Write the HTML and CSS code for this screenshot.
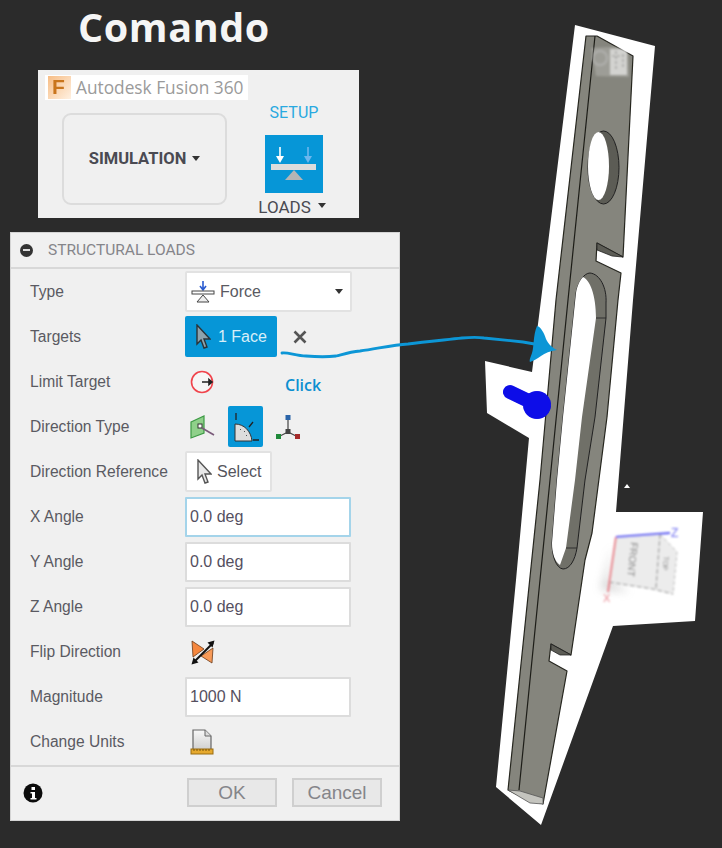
FILE: index.html
```html
<!DOCTYPE html>
<html lang="pt">
<head>
    <meta charset="UTF-8">
    <meta name="viewport" content="width=device-width, initial-scale=1.0">
    <title>Comando</title>
    <link rel="stylesheet" href="styles.css">
</head>
<body>
<div class="page">
    <div class="left">
        <h1 class="title">Comando</h1>

        <div class="toolbar">
            <div class="app-strip">
                <svg class="app-logo" width="23" height="23" viewBox="0 0 23 23">
                    <defs>
                        <linearGradient id="logoBg" x1="0" y1="0" x2="1" y2="1">
                            <stop offset="0" stop-color="#f7bd85"/>
                            <stop offset="1" stop-color="#fff1e2"/>
                        </linearGradient>
                        <filter id="logoBlur">
                            <feGaussianBlur stdDeviation="0.6"/>
                        </filter>
                    </defs>
                    <rect width="23" height="23" fill="url(#logoBg)"/>
                    <text x="4" y="18" class="logo-letter" filter="url(#logoBlur)">F</text>
                </svg>
                <span>Autodesk Fusion 360</span>
            </div>
            <div class="ribbon">
                <div class="sim-btn">SIMULATION<span class="caret"></span></div>
                <div class="setup">
                    <div class="setup-title">SETUP</div>
                    <svg class="setup-icon" width="58" height="58" viewBox="0 0 58 58">
                        <rect width="58" height="58" fill="#0696d7"/>
                        <path d="M15 12v13" stroke="#fff" stroke-width="1.6"/>
                        <path d="M11 21h8l-4 7z" fill="#fff"/>
                        <path d="M43 12v13" stroke="#6db7ee" stroke-width="1.6"/>
                        <path d="M39 21h8l-4 7z" fill="#6db7ee"/>
                        <rect x="6" y="29" width="45" height="6" fill="#dcdcdc"/>
                        <path d="M20 45l9-10 9 10z" fill="#b5b5b5"/>
                    </svg>
                    <div class="setup-label">LOADS<span class="caret small"></span></div>
                </div>
            </div>
        </div>

        <div class="dialog">
            <div class="dialog-head">
                <span class="minus"></span>
                <span>STRUCTURAL LOADS</span>
            </div>

            <div class="row">
                <label>Type</label>
                <div class="select">
                    <svg width="24" height="24" viewBox="0 0 24 24">
                        <path d="M12 1v8M9 6l3 4 3-4" fill="none" stroke="#2a5bd0" stroke-width="1.6"/>
                        <rect x="1" y="11" width="22" height="3" fill="#fff" stroke="#444"/>
                        <path d="M12 15l-6 7h12z" fill="#eee" stroke="#444"/>
                    </svg>
                    <span>Force</span>
                    <span class="caret end"></span>
                </div>
            </div>
            <div class="row">
                <label>Targets</label>
                <div class="target-btn">
                    <svg width="16" height="25" viewBox="0 0 16 25">
                        <path d="M2 1v19l4-4 3 8 3-1-3-8h6z" fill="#8fa3ad" stroke="#2b3338" stroke-width="1.4"/>
                    </svg>
                    <span>1 Face</span>
                </div>
                <svg class="clear" width="14" height="14" viewBox="0 0 14 14">
                    <path d="M1.5 1.5l11 11M12.5 1.5l-11 11" stroke="#555" stroke-width="2.6"/>
                </svg>
            </div>
            <div class="row">
                <label>Limit Target</label>
                <svg class="row-icon" width="24" height="24" viewBox="0 0 24 24">
                    <circle cx="12" cy="12" r="10.5" fill="#f6f6f6" stroke="#f0444c" stroke-width="1.6"/>
                    <path d="M12 12h10M19 9.500l3 2.500-3 2.500z" stroke="#222" stroke-width="1.6"/>
                </svg>
            </div>
            <div class="row">
                <label>Direction Type</label>
                <div class="dir-icons">
                    <svg width="26" height="26" viewBox="0 0 26 26">
                        <path d="M2 8l13-6v17l-13 5z" fill="#8fd08a" stroke="#3d9a45" stroke-width="1.2"/>
                        <rect x="9" y="10" width="4" height="4" fill="#fff" stroke="#333"/>
                        <path d="M13 14l12 7" stroke="#7a5a7a" stroke-width="1.6"/>
                    </svg>
                    <div class="dir-active">
                        <svg width="28" height="34" viewBox="0 0 28 34">
                            <path d="M4 3v7M21 12l-4 5M21 30h6" stroke="#222" stroke-width="1.3"/>
                            <path d="M3 14c9 0 16 7 17 17H3z" fill="#ddd" stroke="#333"/>
                            <path d="M8 19l1 1M12 21l1 1M14 25l1 1" stroke="#555"/>
                        </svg>
                    </div>
                    <svg width="26" height="26" viewBox="0 0 26 26">
                        <path d="M13 4v14M13 18l-8 4M13 18l8 4" stroke="#444" stroke-width="1.2"/>
                        <rect x="10.500" y="1" width="5" height="5" fill="#2a64a8"/>
                        <rect x="10.500" y="15" width="5" height="5" fill="#444"/>
                        <rect x="1" y="20" width="5" height="5" fill="#1f8a3a"/>
                        <rect x="20" y="20" width="5" height="5" fill="#a52a2a"/>
                    </svg>
                </div>
            </div>
            <div class="row">
                <label>Direction Reference</label>
                <div class="select-btn">
                    <svg width="16" height="25" viewBox="0 0 16 25">
                        <path d="M2 1v19l4-4 3 8 3-1-3-8h6z" fill="#e8e8e8" stroke="#555" stroke-width="1.4"/>
                    </svg>
                    <span>Select</span>
                </div>
            </div>
            <div class="row">
                <label>X Angle</label>
                <input class="field focus" type="text" value="0.0 deg">
            </div>
            <div class="row">
                <label>Y Angle</label>
                <input class="field" type="text" value="0.0 deg">
            </div>
            <div class="row">
                <label>Z Angle</label>
                <input class="field" type="text" value="0.0 deg">
            </div>
            <div class="row">
                <label>Flip Direction</label>
                <svg class="row-icon" width="26" height="26" viewBox="0 0 26 26">
                    <path d="M2 2l12 8-11 8z" fill="#f5873e" stroke="#6b3a18" stroke-width="0.8"/>
                    <path d="M23 9l-1 15-11-7z" fill="#f79a58" stroke="#6b3a18" stroke-width="0.8"/>
                    <path d="M4 23L23 4" stroke="#111" stroke-width="2"/>
                    <path d="M1.500 25.500l2-7 5 5zM24.500 1.500l-7 2 5 5z" fill="#111"/>
                </svg>
            </div>
            <div class="row">
                <label>Magnitude</label>
                <input class="field" type="text" value="1000 N">
            </div>
            <div class="row">
                <label>Change Units</label>
                <svg class="row-icon" width="24" height="26" viewBox="0 0 24 26">
                    <defs>
                        <linearGradient id="pageBg" x1="0" y1="0" x2="0" y2="1">
                            <stop offset="0" stop-color="#f8f8f8"/>
                            <stop offset="1" stop-color="#cfcfcf"/>
                        </linearGradient>
                    </defs>
                    <path d="M3 1h12l6 6v14H3z" fill="url(#pageBg)" stroke="#666" stroke-width="1.2"/>
                    <path d="M15 1v6h6" fill="#ddd" stroke="#666"/>
                    <rect x="1" y="20" width="22" height="5" fill="#e6a92e" stroke="#9a6c10"/>
                    <path d="M4 20v2M7 20v2M10 20v2M13 20v2M16 20v2M19 20v2" stroke="#7a5408"/>
                </svg>
            </div>

            <div class="dialog-foot">
                <svg width="20" height="20" viewBox="0 0 20 20">
                    <circle cx="10" cy="10" r="9.500" fill="#0c0c0c"/>
                    <rect x="8.500" y="4" width="3.500" height="3" fill="#fff"/>
                    <path d="M7.500 9h4.500v6h1.500v1.500h-6V15h1.500v-4.500H7.500z" fill="#fff"/>
                </svg>
                <div class="foot-btns">
                    <div class="btn ok">OK</div>
                    <div class="btn cancel">Cancel</div>
                </div>
            </div>

            <span class="click-note">Click</span>
        </div>
    </div>

    <svg class="model" width="242" height="848" viewBox="480 0 242 848">
        <defs>
            <filter id="soft" filterUnits="userSpaceOnUse" x="480" y="0" width="242" height="848">
                <feGaussianBlur stdDeviation="0.45"/>
            </filter>
            <filter id="softer" filterUnits="userSpaceOnUse" x="480" y="0" width="242" height="848">
                <feGaussianBlur stdDeviation="0.8"/>
            </filter>
            <filter id="shade" filterUnits="userSpaceOnUse" x="480" y="0" width="242" height="848">
                <feGaussianBlur stdDeviation="4"/>
            </filter>
        </defs>

        <path d="M575 25L655 46L633 300L616 512H703L695 621L613 626L541 825L496 787L516 580L529 438L487 413L485 361L532 372L541 300Z" fill="#fff"/>
        <path d="M627 484l3 4h-6z" fill="#fff"/>

        <g filter="url(#soft)">
            <path d="M586 36H597L633 56L623 257L597 243L596 261L621 273L618 300L607 417L592 533L585 560L571 655L551 644L549 661L567 671L543 804L520 796L508 790L540 480L556 300Z" fill="#85857d" stroke="#26261f" stroke-width="1.2" stroke-linejoin="round"/>
            <path d="M595 36L568 300L550 480L519 790" stroke="#1d1d18" stroke-width="1.2" fill="none"/>
            <path d="M508 790L520 791L543 798L543 804L530 803Z" fill="#c4c4be" stroke="#555" stroke-width="0.8"/>

            <!-- first hole -->
            <ellipse cx="603.500" cy="167.500" rx="15.500" ry="36.500" fill="#5c5c54" stroke="#222" stroke-width="1"/>
            <ellipse cx="598.500" cy="166" rx="10.500" ry="34" fill="#fff"/>

            <!-- notch walls -->
            <path d="M597 243L623 257L612 256L597 250Z" fill="#5c5c54" stroke="#222" stroke-width="0.8"/>
            <path d="M551 644L571 655L560 655L551 650Z" fill="#5c5c54" stroke="#222" stroke-width="0.8"/>

            <!-- long slot -->
            <path d="M590 273C600 274 607 288 606 303L606 318L595 417L585 480L577 548C575 560 570 569 563 569C556 568 552 556 552 543L557 480L563 417L576 293C578 282 584 273 590 273Z" fill="#6f6f68" stroke="#222" stroke-width="1"/>
            <path d="M583 277C590 280 596 295 596 318L582 417L575 480L566 548L560 565C555 562 552 553 552 543L557 480L563 417L576 293C577 286 580 280 583 277Z" fill="#fff"/>
            <path d="M596 318H606M566 548H577" stroke="#222" stroke-width="0.8"/>
        </g>

        <!-- ghost view cube at the top of the part -->
        <g filter="url(#softer)">
            <path d="M591 48L628 46L629 77L596 76Z" fill="#fff" opacity="0.2"/>
            <rect x="610" y="49" width="17" height="26" fill="#fff" opacity="0.55"/>
            <circle cx="600" cy="58" r="7" fill="none" stroke="#bbb" stroke-width="2" opacity="0.6"/>
            <path d="M612 56h12M616 51v20M623 54v14" stroke="#666" stroke-width="1.2" stroke-dasharray="3 2" opacity="0.6"/>
        </g>

        <!-- blue mark on the part -->
        <g filter="url(#soft)">
            <path d="M510 392L537 405" stroke="#0808e8" stroke-width="14" stroke-linecap="round"/>
            <circle cx="537" cy="405" r="14" fill="#0808e8"/>
        </g>

        <!-- view cube -->
        <path d="M612 545L608 580L630 592L600 590Z" fill="#999" opacity="0.35" filter="url(#shade)"/>
        <g filter="url(#softer)">
            <path d="M616 537L660 534L677 552L673 594L653 589L609 582Z" fill="#ececec"/>
            <path d="M660 534L656 588M609 582L653 589L673 594" fill="none" stroke="#8a8a8a" stroke-width="1" stroke-dasharray="5 2"/>
            <path d="M660 534L677 552L673 594" fill="none" stroke="#bbb" stroke-width="1" stroke-dasharray="4 2"/>
            <path d="M616 537L608 592" stroke="#e8848c" stroke-width="2"/>
            <path d="M616 537L670 533" stroke="#5a5af2" stroke-width="2"/>
            <text class="cube-text" x="0" y="0" transform="translate(631 542) rotate(96)">FRONT</text>
            <text class="cube-small" x="0" y="0" transform="translate(664 556) rotate(96)">TOP</text>
            <text class="cube-z" x="671" y="537">Z</text>
            <text class="cube-x" x="603" y="602">X</text>
        </g>
    </svg>

    <!-- hand drawn arrow goes over dialog and part -->
    <svg class="arrow" width="722" height="848" viewBox="0 0 722 848">
        <path d="M282 353C288 352 296 356 306 356C318 357 328 357 336 356C344 354 350 352 360 351C376 349 392 345 408 344C424 342 444 340 462 338C472 337 478 337 484 338L523 342L546 346" fill="none" stroke="#0c96d6" stroke-width="2.8" stroke-linecap="round"/>
        <path d="M537 326C541 327 544 333 546 339C548 344 553 348 557 350C550 351 545 353 541 356C537 359 533 361 530 362C529 360 531 356 532 353C534 347 533 335 537 326Z" fill="#0c96d6"/>
    </svg>
</div>
</body>
</html>
```

FILE: styles.css
```css
* {
    box-sizing: border-box;
}
html, body {
    margin: 0;
    padding: 0;
    background-color: #2b2b2b;
}
.page {
    position: relative;
    display: flex;
    width: 722px;
    height: 848px;
    overflow: hidden;
    font-family: Roboto, Arial, sans-serif;
}
.left {
    width: 480px;
    flex: none;
}
.title {
    margin: 0;
    height: 70px;
    padding-left: 78px;
    font-family: "Open Sans", sans-serif;
    font-size: 39.500px;
    font-weight: 700;
    line-height: 54px;
    letter-spacing: 0.6px;
    color: #f5f5f5;
}

/* toolbar */
.toolbar {
    margin-left: 38px;
    width: 321px;
    height: 148px;
    padding-top: 5px;
    background-color: #f0f0f0;
}
.app-strip {
    display: flex;
    align-items: center;
    gap: 5px;
    width: 203px;
    height: 25px;
    margin-left: 7px;
    padding-left: 3px;
    background-color: #fff;
    font-family: "Open Sans", sans-serif;
    font-size: 17.300px;
    color: #9a9a9a;
    white-space: nowrap;
}
.logo-letter {
    font-family: "Liberation Sans", sans-serif;
    font-size: 21px;
    font-weight: 700;
    fill: #c9751f;
}
.ribbon {
    display: flex;
    margin-left: 24px;
}
.sim-btn {
    display: flex;
    align-items: center;
    justify-content: center;
    width: 165px;
    height: 92px;
    margin-top: 13px;
    padding-bottom: 2px;
    border: 2px solid #dcdcdc;
    border-radius: 9px;
    font-size: 16.500px;
    font-weight: 700;
    color: #4a4a52;
}
.caret {
    display: inline-block;
    margin-left: 6px;
    border-left: 4.500px solid transparent;
    border-right: 4.500px solid transparent;
    border-top: 5px solid #333;
}
.caret.small {
    margin-left: 7px;
    margin-bottom: 3px;
}
.setup {
    display: flex;
    flex-direction: column;
    align-items: center;
    width: 70px;
    margin-left: 32px;
    margin-top: 4px;
}
.setup-title {
    font-size: 16px;
    line-height: 18px;
    color: #29a9e0;
}
.setup-icon {
    margin-top: 13px;
}
.setup-label {
    margin-top: 5px;
    margin-right: 4px;
    display: flex;
    align-items: center;
    font-size: 17px;
    line-height: 18px;
    color: #4a4a52;
    white-space: nowrap;
}

/* dialog */
.dialog {
    position: relative;
    width: 390px;
    height: 589px;
    margin-top: 14px;
    margin-left: 10px;
    background-color: #f0f0f0;
    border: 1px solid #d4d4d4;
}
.dialog-head {
    display: flex;
    align-items: center;
    gap: 15px;
    height: 36px;
    padding-left: 9px;
    border-bottom: 2px solid #d8d8d8;
    font-size: 15.500px;
    color: #85858a;
}
.minus {
    position: relative;
    width: 13px;
    height: 13px;
    border-radius: 50%;
    background-color: #333;
}
.minus::after {
    content: "";
    position: absolute;
    left: 3px;
    top: 5.500px;
    width: 7px;
    height: 2px;
    background-color: #ddd;
}
.row {
    display: flex;
    align-items: center;
    height: 45px;
    padding-left: 19px;
    font-family: "Liberation Sans", Arial, sans-serif;
    font-size: 15.600px;
    color: #5a5a62;
}
.row label {
    width: 155px;
    flex: none;
    white-space: nowrap;
}
.select {
    display: flex;
    align-items: center;
    gap: 5px;
    width: 167px;
    height: 41px;
    padding: 0 7px 0 4px;
    background-color: #fff;
    border: 2px solid #e2e2e2;
    border-radius: 2px;
    font-size: 16px;
}
.caret.end {
    margin-left: auto;
}
.target-btn {
    display: flex;
    align-items: center;
    gap: 7px;
    width: 92px;
    height: 41px;
    padding-left: 10px;
    background-color: #0696d7;
    border-radius: 2px;
    font-size: 16px;
    color: #d8eef8;
}
.clear {
    margin-left: 16px;
}
.row-icon {
    margin-left: 5px;
}
.dir-icons {
    display: flex;
    align-items: center;
    margin-left: 4px;
}
.dir-active {
    display: flex;
    align-items: center;
    justify-content: center;
    width: 35px;
    height: 41px;
    margin: 0 12px 0 13px;
    background-color: #0696d7;
    border-radius: 2px;
}
.select-btn {
    display: flex;
    align-items: center;
    gap: 5px;
    width: 87px;
    height: 41px;
    padding-left: 9px;
    background-color: #fff;
    border: 2px solid #e2e2e2;
    border-radius: 2px;
    font-size: 16px;
    color: #55555d;
}
.field {
    width: 166px;
    height: 40px;
    padding: 0 3px;
    background-color: #fff;
    border: 2px solid #dcdcdc;
    border-radius: 1px;
    outline: none;
    font-family: "Liberation Sans", Arial, sans-serif;
    font-size: 16px;
    color: #55505f;
}
.field.focus {
    border-color: #a4d4ea;
}
.dialog-foot {
    display: flex;
    align-items: center;
    justify-content: space-between;
    height: 53px;
    margin-top: 1px;
    padding: 0 17px 0 12px;
    border-top: 2px solid #d8d8d8;
}
.foot-btns {
    display: flex;
    gap: 15px;
}
.btn {
    display: flex;
    align-items: center;
    justify-content: center;
    height: 29px;
    background-color: #e8e8e8;
    border: 2px solid #cfcfcf;
    font-family: "Liberation Sans", Arial, sans-serif;
    font-size: 19px;
    color: #85858a;
}
.btn.ok {
    width: 90px;
}
.btn.cancel {
    width: 90px;
}
.click-note {
    position: absolute;
    left: 274px;
    top: 141px;
    font-family: "Open Sans", sans-serif;
    font-size: 16px;
    font-weight: 600;
    color: #0b8fd0;
}

/* right part */
.model {
    flex: none;
    display: block;
}
.arrow {
    position: absolute;
    left: 0;
    top: 0;
    pointer-events: none;
}
.cube-text {
    font-family: "Liberation Sans", sans-serif;
    font-size: 10px;
    fill: #777;
}
.cube-small {
    font-family: "Liberation Sans", sans-serif;
    font-size: 7px;
    fill: #888;
}
.cube-z {
    font-family: "Liberation Sans", sans-serif;
    font-size: 12px;
    fill: #6f6ff0;
}
.cube-x {
    font-family: "Liberation Sans", sans-serif;
    font-size: 11px;
    fill: #ea8c94;
}
```
